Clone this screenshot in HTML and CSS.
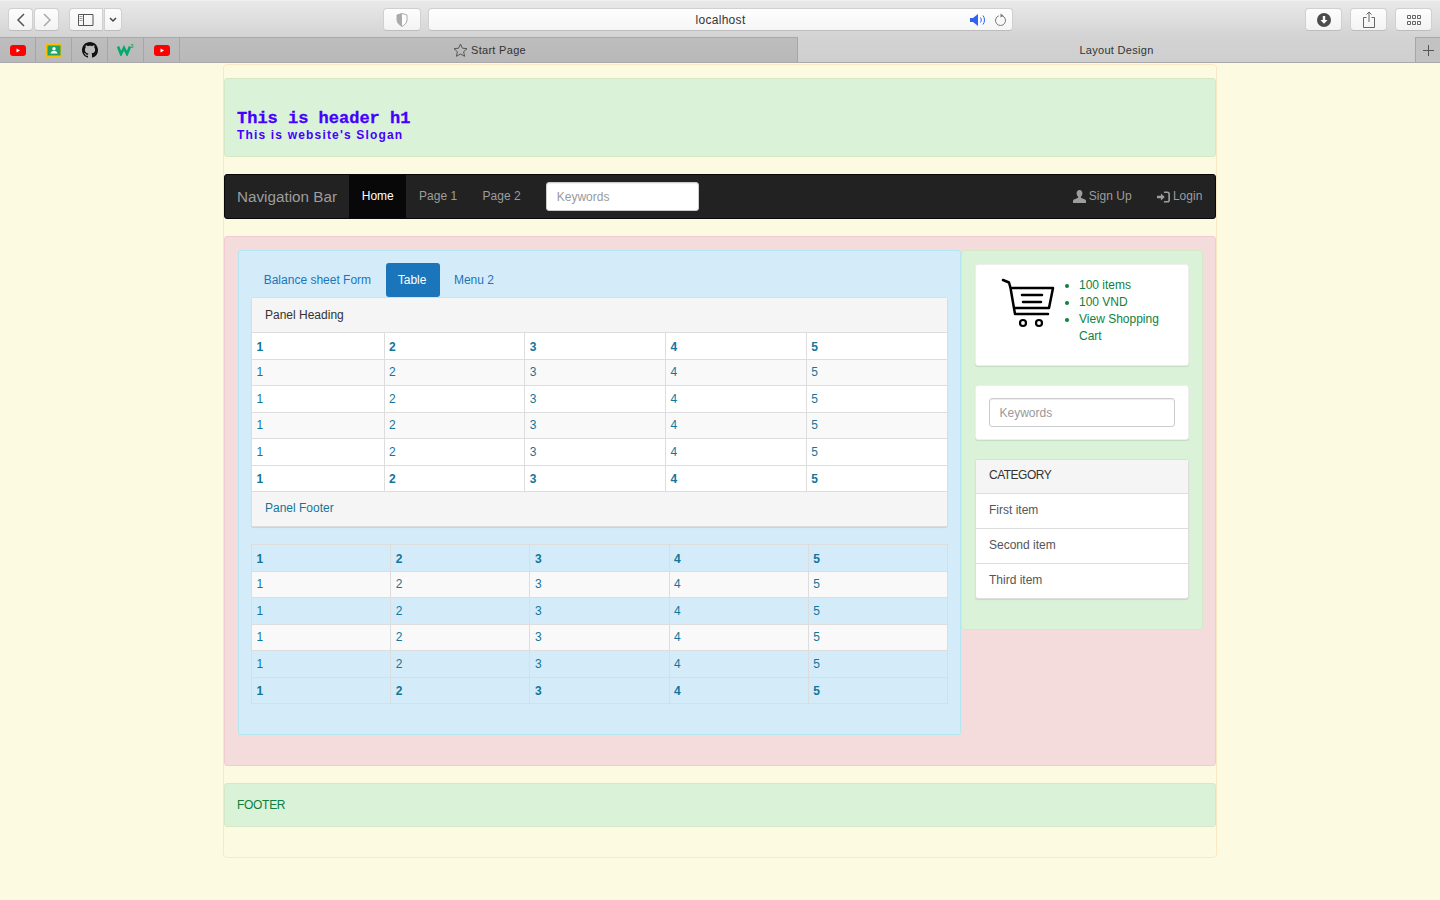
FILE: index.html
```html
<!DOCTYPE html>
<html lang="en">
<head>
    <meta charset="UTF-8">
    <meta name="viewport" content="width=device-width, initial-scale=1.0">
    <title>Layout Design</title>
    <link rel="stylesheet" href="styles.css">
</head>
<body>
    <div class="browser">
        <div class="toolbar">
            <div class="btn-group nav-arrows">
                <div class="tool-btn arrow"><svg width="10" height="14" viewBox="0 0 10 14"><path d="M8 1 2 7l6 6" fill="none" stroke="#555" stroke-width="1.5"/></svg></div>
                <div class="tool-btn arrow"><svg width="10" height="14" viewBox="0 0 10 14"><path d="M2 1l6 6-6 6" fill="none" stroke="#aaa" stroke-width="1.5"/></svg></div>
            </div>
            <div class="btn-group sidebar-group">
                <div class="tool-btn sidebar-btn"><svg width="16" height="12" viewBox="0 0 16 12"><path d="M.5.5h14.5v11H.5zM5.5.5v11" fill="none" stroke="#555"/><path d="M1.5 2.500h3M1.500 4.500h3M1.500 6.500h3" stroke="#999"/></svg></div>
                <div class="tool-btn chevron-btn"><svg width="8" height="6" viewBox="0 0 8 6"><path d="M1 1l3 3 3-3" fill="none" stroke="#444" stroke-width="1.500"/></svg></div>
            </div>
            <div class="tool-btn shield-btn"><svg width="12" height="14" viewBox="0 0 12 14"><path d="M6 .5l5 1.500v5c0 3-2.500 5-5 6.500C3.500 12 1 10 1 7V2z" fill="#fff" stroke="#aaa"/><path d="M6 .5 1 2v5c0 3 2.500 5 5 6.500z" fill="#aaa"/></svg></div>
            <div class="address-bar">
                <span class="address-text">localhost</span>
                <svg class="speaker" width="18" height="12" viewBox="0 0 18 12"><path d="M0 4h3l5-4v12L3 8H0z" fill="#2f62f2"/><path d="M10.500 3.500c1 1.500 1 3.500 0 5M13 1.500c2 2.500 2 6.500 0 9" fill="none" stroke="#2f62f2"/></svg>
                <svg class="reload" width="13" height="14" viewBox="0 0 13 14"><path d="M8.200 2.800a5 5 0 1 1-3.400 0" fill="none" stroke="#777"/><path d="M6.500.5l3 2.300-3 1.800z" fill="#777"/></svg>
            </div>
            <div class="tool-btn right-btn download-btn"><svg width="14" height="14" viewBox="0 0 14 14"><circle cx="7" cy="7" r="7" fill="#4d4d4d"/><path d="M5.800 3h2.400v4h2.300L7 10.800 3.500 7h2.300z" fill="#fff"/></svg></div>
            <div class="tool-btn right-btn"><svg width="12" height="17" viewBox="0 0 12 17"><path d="M3.500 6.500H.5v10h11v-10h-3" fill="none" stroke="#666"/><path d="M6 11V1M3.500 3.500 6 1l2.500 2.500" fill="none" stroke="#666"/></svg></div>
            <div class="tool-btn right-btn"><svg width="14" height="10" viewBox="0 0 14 10"><path d="M.5.5h3v3h-3zM5.500.5h3v3h-3zM10.500.5h3v3h-3zM.5 6.500h3v3h-3zM5.500 6.500h3v3h-3zM10.500 6.500h3v3h-3z" fill="none" stroke="#666"/></svg></div>
        </div>
        <div class="tabbar">
            <div class="fav"><svg width="16" height="11" viewBox="0 0 16 11"><rect width="16" height="11" rx="3" fill="#f00"/><path d="M6.500 3.500l3.500 2-3.500 2z" fill="#fff"/></svg></div>
            <div class="fav"><svg width="16" height="13" viewBox="0 0 16 13"><rect width="16" height="13" fill="#f9bc07"/><rect x="1.500" y="1.500" width="13" height="10" fill="#1fa463"/><circle cx="8" cy="4.800" r="1.700" fill="#fff"/><path d="M4.500 9.500c.5-2 1.800-2.500 3.500-2.500s3 .5 3.500 2.500z" fill="#fff"/></svg></div>
            <div class="fav"><svg width="16" height="16" viewBox="0 0 16 16"><path d="M8 0C3.580 0 0 3.580 0 8c0 3.540 2.290 6.530 5.470 7.590.4.070.55-.17.55-.38 0-.19-.01-.82-.01-1.490-2.010.37-2.530-.49-2.690-.94-.09-.23-.48-.94-.82-1.130-.28-.15-.68-.52-.01-.53.630-.01 1.080.58 1.230.82.720 1.210 1.870.87 2.330.66.070-.52.280-.87.510-1.070-1.780-.2-3.640-.89-3.640-3.950 0-.87.310-1.590.82-2.150-.08-.2-.36-1.020.08-2.120 0 0 .67-.21 2.200.82.640-.18 1.320-.27 2-.27s1.360.09 2 .27c1.530-1.040 2.200-.82 2.200-.82.440 1.100.160 1.920.08 2.120.51.560.82 1.270.82 2.150 0 3.070-1.870 3.750-3.650 3.950.290.250.540.730.540 1.480 0 1.070-.010 1.930-.010 2.200 0 .210.150.460.550.380A8.010 8.010 0 0 0 16 8c0-4.420-3.580-8-8-8z" fill="#111"/></svg></div>
            <div class="fav"><svg width="17" height="12" viewBox="0 0 17 12"><path d="M1 2.500 4 10l3-6 3 6 3-7.500" fill="none" stroke="#04aa6d" stroke-width="2.600"/><text x="13.500" y="4" class="w3-mark">3</text></svg></div>
            <div class="fav"><svg width="16" height="11" viewBox="0 0 16 11"><rect width="16" height="11" rx="3" fill="#f00"/><path d="M6.500 3.500l3.500 2-3.500 2z" fill="#fff"/></svg></div>
            <div class="tab tab-inactive">
                <svg width="15" height="14" viewBox="0 0 15 14"><path d="M7.500 1l1.900 4.200 4.600.5-3.400 3.100 1 4.500-4.100-2.300-4.100 2.300 1-4.500L1 5.700l4.600-.5z" fill="none" stroke="#555"/></svg>
                <span>Start Page</span>
            </div>
            <div class="tab tab-active"><span>Layout Design</span></div>
            <div class="tab-add"><svg width="11" height="11" viewBox="0 0 11 11"><path d="M5.500 0v11M0 5.500h11" stroke="#555"/></svg></div>
        </div>
    </div>

    <div class="container">
        <header class="alert alert-success site-header">
            <h1>This is header h1</h1>
            <p class="slogan">This is website's Slogan</p>
        </header>

        <nav class="navbar">
            <a class="brand">Navigation Bar</a>
            <a class="nav-link nav-active">Home</a>
            <a class="nav-link">Page 1</a>
            <a class="nav-link">Page 2</a>
            <input class="form-control nav-search" type="text" placeholder="Keywords">
            <div class="nav-right">
                <a class="nav-link nav-icon-link"><svg width="13" height="13" viewBox="0 0 13 13"><path d="M6.500 0C4.700 0 3.600 1.400 3.600 3.300c0 1.500.6 2.800 1.500 3.500v1L.9 9.500C.3 9.800 0 10.300 0 11v2h13v-2c0-.7-.3-1.200-.9-1.500L7.900 7.800v-1c.9-.7 1.500-2 1.500-3.500C9.400 1.400 8.300 0 6.500 0z" fill="#9d9d9d"/></svg>Sign Up</a>
                <a class="nav-link nav-icon-link"><svg width="13" height="12" viewBox="0 0 15 13"><path d="M0 5h4.500V2.500L9 6.500l-4.500 4V8H0z" fill="#9d9d9d"/><path d="M8 1h4c1.200 0 2 .8 2 2v7c0 1.200-.8 2-2 2H8" fill="none" stroke="#9d9d9d" stroke-width="1.900"/></svg>Login</a>
            </div>
        </nav>

        <main class="alert alert-danger main-area">
            <section class="content-box">
                <ul class="pills">
                    <li class="pill">Balance sheet Form</li>
                    <li class="pill pill-active">Table</li>
                    <li class="pill">Menu 2</li>
                </ul>
                <div class="panel">
                    <div class="panel-heading">Panel Heading</div>
                    <table class="grid grid-panel">
                        <colgroup><col class="col-first"><col class="col-rest"><col class="col-rest"><col class="col-rest"><col class="col-rest"></colgroup>
                        <thead><tr><th>1</th><th>2</th><th>3</th><th>4</th><th>5</th></tr></thead>
                        <tbody>
                            <tr><td>1</td><td>2</td><td>3</td><td>4</td><td>5</td></tr>
                            <tr><td>1</td><td>2</td><td>3</td><td>4</td><td>5</td></tr>
                            <tr><td>1</td><td>2</td><td>3</td><td>4</td><td>5</td></tr>
                            <tr><td>1</td><td>2</td><td>3</td><td>4</td><td>5</td></tr>
                        </tbody>
                        <tfoot><tr><th>1</th><th>2</th><th>3</th><th>4</th><th>5</th></tr></tfoot>
                    </table>
                    <div class="panel-footer">Panel Footer</div>
                </div>
                <table class="grid grid-plain">
                    <thead><tr><th>1</th><th>2</th><th>3</th><th>4</th><th>5</th></tr></thead>
                    <tbody>
                        <tr><td>1</td><td>2</td><td>3</td><td>4</td><td>5</td></tr>
                        <tr><td>1</td><td>2</td><td>3</td><td>4</td><td>5</td></tr>
                        <tr><td>1</td><td>2</td><td>3</td><td>4</td><td>5</td></tr>
                        <tr><td>1</td><td>2</td><td>3</td><td>4</td><td>5</td></tr>
                    </tbody>
                    <tfoot><tr><th>1</th><th>2</th><th>3</th><th>4</th><th>5</th></tr></tfoot>
                </table>
            </section>

            <aside class="side-box">
                <div class="side-panel cart-panel">
                    <svg class="cart-icon" width="56" height="50" viewBox="0 0 56 50">
                        <path d="M3 2l6 2.500 1.500 5.500 4.500 26h33M10.500 10H53l-4 20H14M22 17h20M23 24h18" fill="none" stroke="#000" stroke-width="2.500" stroke-linecap="round" stroke-linejoin="round"/>
                        <circle cx="23" cy="45" r="3" fill="none" stroke="#000" stroke-width="2.200"/>
                        <circle cx="39" cy="45" r="3" fill="none" stroke="#000" stroke-width="2.200"/>
                    </svg>
                    <ul class="cart-list">
                        <li>100 items</li>
                        <li>100 VND</li>
                        <li>View Shopping Cart</li>
                    </ul>
                </div>
                <div class="side-panel search-panel">
                    <input class="form-control" type="text" placeholder="Keywords">
                </div>
                <div class="side-panel category-panel">
                    <div class="panel-heading">CATEGORY</div>
                    <div class="category-item">First item</div>
                    <div class="category-item">Second item</div>
                    <div class="category-item">Third item</div>
                </div>
            </aside>
        </main>

        <footer class="alert alert-success site-footer">FOOTER</footer>
    </div>
</body>
</html>
```

FILE: styles.css
```css
* {
    box-sizing: border-box;
}
body {
    margin: 0;
    background-color: #fdfae2;
    font-family: "Liberation Sans", Arial, sans-serif;
    font-size: 12px;
    line-height: 17px;
    color: #333;
}

/* browser chrome */
.browser {
    height: 63px;
    border-bottom: 1px solid #a9a9a9;
}
.toolbar {
    display: flex;
    height: 37px;
    padding: 8px 8px 0;
    background: linear-gradient(#e9e9e9, #d3d3d3);
    border-top: 1px solid #f0f0f0;
}
.toolbar > * {
    margin-top: -1px;
}
.btn-group {
    display: flex;
    gap: 1px;
}
.tool-btn {
    display: flex;
    align-items: center;
    justify-content: center;
    height: 23px;
    background: linear-gradient(#fdfdfd, #f3f3f3);
    border: 1px solid #d0d0d0;
    border-bottom-color: #bdbdbd;
    border-radius: 4px;
}
.arrow {
    width: 25px;
}
.sidebar-group {
    margin-left: 10px;
}
.sidebar-btn {
    width: 34px;
    border-radius: 4px 0 0 4px;
}
.chevron-btn {
    width: 18px;
    border-radius: 0 4px 4px 0;
}
.shield-btn {
    width: 38px;
    margin-left: 261px;
}
.address-bar {
    display: flex;
    align-items: center;
    position: relative;
    width: 585px;
    height: 23px;
    margin-left: 7px;
    background: linear-gradient(#fefefe, #f6f6f6);
    border: 1px solid #d0d0d0;
    border-bottom-color: #bdbdbd;
    border-radius: 4px;
}
.address-text {
    flex: 1;
    padding-top: 1px;
    text-align: center;
    letter-spacing: 0.3px;
    color: #333;
}
.speaker {
    position: absolute;
    right: 24px;
    top: 5px;
}
.reload {
    position: absolute;
    right: 5px;
    top: 4px;
}
.right-btn {
    width: 37px;
    margin-left: 8px;
}
.download-btn {
    margin-left: 292px;
}
.tabbar {
    display: flex;
    height: 25px;
    background: linear-gradient(#d3d3d3, #cfcfcf);
}
.fav {
    display: flex;
    align-items: center;
    justify-content: center;
    width: 36px;
    background: linear-gradient(#bdbdbd, #b9b9b9);
    border-top: 1px solid #a9a9a9;
    border-right: 1px solid #a6a6a6;
}
.w3-mark {
    font-size: 5px;
    font-weight: bold;
    fill: #04aa6d;
}
.tab {
    display: flex;
    align-items: center;
    justify-content: center;
    gap: 3px;
    width: 618px;
    font-size: 11px;
    letter-spacing: 0.3px;
    color: #333;
}
.tab-inactive {
    padding-left: 2px;
    background: linear-gradient(#bdbdbd, #b9b9b9);
    border-top: 1px solid #a9a9a9;
    border-right: 1px solid #a6a6a6;
}
.tab-active {
    width: 617px;
    padding: 1px 0 0 20px;
}
.tab-add {
    display: flex;
    align-items: center;
    justify-content: center;
    width: 25px;
    background: #c2c2c2;
    border-top: 1px solid #a9a9a9;
    border-left: 1px solid #a6a6a6;
}

/* page */
.container {
    width: 994px;
    margin: 1px auto 0;
    padding: 13px 0 30px;
    border: 1px solid #fbe8c4;
    border-radius: 4px;
    background-color: #fdfae2;
}
.alert {
    border: 1px solid transparent;
    border-radius: 3px;
}
.alert-success {
    background-color: #daf2d8;
    border-color: #d6e9c6;
    color: #0f7f3f;
}
.alert-danger {
    background-color: #f5dcdc;
    border-color: #f0ccd1;
}
.site-header {
    height: 79px;
    padding: 30px 12px 0;
    margin-bottom: 17px;
}
.site-header h1 {
    margin: 0;
    font-family: "Liberation Mono", monospace;
    font-size: 17px;
    line-height: 19px;
    font-weight: bold;
    color: #4400ff;
    -webkit-text-stroke: 0.3px #4400ff;
}
.slogan {
    margin: 0;
    font-size: 12px;
    line-height: 15px;
    font-weight: bold;
    letter-spacing: 1.17px;
    color: #4400ff;
}
.navbar {
    display: flex;
    align-items: stretch;
    height: 45px;
    margin-bottom: 17px;
    background-color: #222;
    border: 1px solid #080808;
    border-radius: 3px;
}
.brand {
    padding: 0 12px;
    font-size: 15.25px;
    line-height: 44px;
    color: #9d9d9d;
}
.nav-link {
    padding: 0 12.7px;
    line-height: 43px;
    color: #9d9d9d;
}
.nav-active {
    background-color: #080808;
    color: #fff;
}
.form-control {
    display: block;
    width: 100%;
    height: 29px;
    padding: 0 9.5px;
    background-color: #fff;
    border: 1px solid #ccc;
    border-radius: 3px;
    font-family: "Liberation Sans", Arial, sans-serif;
    font-size: 12px;
    color: #555;
    box-shadow: inset 0 1px 1px rgba(0, 0, 0, 0.075);
}
.form-control::placeholder {
    color: #999;
    opacity: 1;
}
.nav-search {
    width: 153px;
    margin: 7px 0 0 13px;
}
.nav-right {
    display: flex;
    margin-left: auto;
}
.nav-icon-link {
    display: flex;
    align-items: center;
    gap: 3px;
    height: 43px;
}
.main-area {
    display: flex;
    align-items: flex-start;
    height: 530px;
    padding: 13px 12px 13px 13px;
    margin-bottom: 17px;
}
.content-box {
    flex: none;
    width: 723px;
    height: 485px;
    padding: 12px;
    background-color: #d4ecf9;
    border: 1px solid #b2e6f1;
    border-radius: 3px;
}
.pills {
    display: flex;
    gap: 2px;
    margin: 0;
    padding: 0;
    list-style: none;
}
.pill {
    height: 34px;
    padding: 0 12.7px;
    line-height: 34px;
    color: #1b75bb;
    border-radius: 3px;
}
.pill-active {
    padding: 0 13.5px 0 12px;
    background-color: #1b75bb;
    color: #fff;
}
.pill:last-child {
    padding-left: 12px;
}
.panel {
    margin-bottom: 17px;
    background-color: #fff;
    border: 1px solid #ddd;
    border-radius: 3px;
    box-shadow: 0 1px 1px rgba(0, 0, 0, 0.1);
}
.panel-heading {
    height: 35px;
    padding: 0 13px;
    line-height: 34px;
    background-color: #f5f5f5;
    border-bottom: 1px solid #ddd;
    color: #333;
}
.panel-footer {
    height: 34px;
    padding: 0 13px;
    line-height: 33px;
    background-color: #f5f5f5;
    color: #13759a;
}
.grid {
    width: 100%;
    border-collapse: collapse;
    table-layout: fixed;
    color: #13759a;
}
.grid th,
.grid td {
    height: 26.5px;
    padding: 0 4.5px;
    border: 1px solid #ddd;
    text-align: left;
}
.grid th {
    font-weight: bold;
    padding-top: 3px;
}
.grid-panel {
    background-color: #fff;
    margin-top: -1px;
}
.grid-panel th {
    padding-top: 2px;
}
.grid-panel thead th {
    padding-top: 3px;
}
.grid-panel td {
    padding-top: 1px;
}
.grid-plain td {
    padding-top: 1px;
}
.grid-panel th:first-child,
.grid-panel td:first-child {
    border-left: 0;
}
.grid-panel th:last-child,
.grid-panel td:last-child {
    border-right: 0;
}
.col-first {
    width: 132px;
}
.grid tbody tr:nth-child(odd) {
    background-color: #f9f9f9;
}
.side-box {
    flex: none;
    width: 242px;
    height: 380px;
    padding: 13px;
    background-color: #daf2d8;
    border: 1px solid #d6e9c6;
    border-radius: 3px;
}
.side-panel {
    margin-bottom: 19px;
    background-color: #fff;
    border: 1px solid #ddd;
    border-radius: 3px;
    box-shadow: 0 1px 1px rgba(0, 0, 0, 0.1);
}
.cart-panel {
    display: flex;
    height: 102px;
    padding: 12px 12px 0 24px;
    border-color: #eee;
}
.cart-icon {
    flex: none;
    margin-top: 1px;
}
.cart-list {
    margin: 0;
    padding-left: 23px;
    color: #0f7f3f;
}
.search-panel {
    height: 55px;
    padding: 12px 13px;
    border-color: #eee;
}
.category-panel {
    margin-bottom: 0;
}
.category-panel .panel-heading {
    height: 34px;
    line-height: 31px;
    letter-spacing: -0.5px;
}
.category-item {
    height: 35px;
    padding: 0 13px;
    line-height: 33px;
    border-bottom: 1px solid #ddd;
    color: #555;
}
.category-item:last-child {
    height: 34px;
    border-bottom: 0;
}
.site-footer {
    height: 44px;
    padding: 0 12px;
    line-height: 42px;
    letter-spacing: -0.3px;
}
```
